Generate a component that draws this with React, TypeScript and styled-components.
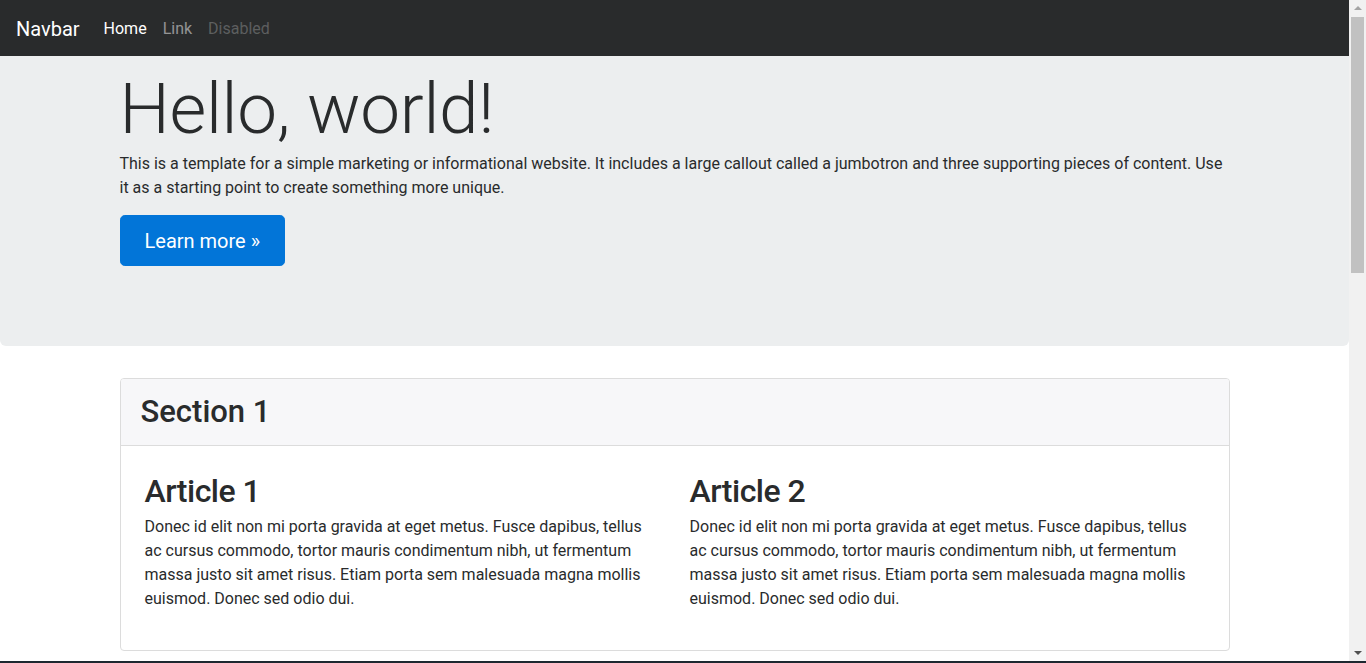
import React from "react";
import styled, { createGlobalStyle } from "styled-components";

const GlobalStyle = createGlobalStyle`
  html, body { margin: 0; padding: 0; overflow: hidden; }
  body {
    font-family: Roboto, "Liberation Sans", sans-serif;
    font-size: 16px;
    line-height: 1.5;
    color: #292b2c;
    background: #fff;
  }
  * { box-sizing: border-box; }
`;

const Screen = styled.div`
  display: flex;
  flex-direction: column;
  height: 663px;
  width: 1366px;
`;

const Window = styled.div`
  display: flex;
  height: 661px;
  overflow: hidden;
`;

const Taskbar = styled.div`
  height: 2px;
  background: #1d2830;
`;

const Page = styled.div`
  flex: 1;
  min-width: 0;
  overflow: hidden;
`;

const Navbar = styled.nav`
  display: flex;
  align-items: center;
  height: 56px;
  padding: 9px 16px 7px;
  background: #292b2c;
`;

const Brand = styled.a`
  font-size: 20px;
  line-height: 30px;
  padding: 5px 0;
  margin-right: 16px;
  color: #fff;
  text-decoration: none;
`;

const NavList = styled.ul`
  display: flex;
  list-style: none;
  margin: 0;
  padding: 0;
`;

const NavLink = styled.a<{ $state: "active" | "normal" | "disabled" }>`
  display: block;
  padding: 8px;
  line-height: 24px;
  text-decoration: none;
  color: ${(p) =>
    p.$state === "active"
      ? "#fff"
      : p.$state === "disabled"
      ? "rgba(255,255,255,0.25)"
      : "rgba(255,255,255,0.5)"};
`;

const Jumbotron = styled.section`
  background: #eceeef;
  padding: 18px 0 80px;
  border-radius: 0 0 6px 6px;
  margin-bottom: 32px;
`;

const Container = styled.div`
  width: 1110px;
  margin: 0 auto;
`;

const Display = styled.h1`
  margin: 0;
  font-size: 71px;
  font-weight: 300;
  line-height: 70px;
  letter-spacing: -0.3px;
`;

const Lead = styled.p`
  margin: 8px 0 15px;
  line-height: 24px;
`;

const PrimaryButton = styled.a`
  display: inline-block;
  padding: 13px 24px 11px;
  font-size: 20px;
  line-height: 25px;
  color: #fff;
  background: #0275d8;
  border: 1px solid #0275d8;
  border-radius: 4.8px;
  text-decoration: none;
`;

const Card = styled.div`
  border: 1px solid #dcdcdc;
  border-radius: 4px;
  overflow: hidden;
`;

const CardHeader = styled.div`
  background: #f7f7f9;
  border-bottom: 1px solid #dcdcdc;
  padding: 16px 20px;
`;

const SectionTitle = styled.h2`
  margin: 0;
  font-size: 31px;
  font-weight: 500;
  line-height: 34px;
`;

const CardBody = styled.div`
  display: grid;
  grid-template-columns: 1fr 1fr;
  column-gap: 30px;
  padding: 28px 24px 23px;
`;

const Article = styled.article``;

const ArticleTitle = styled.h3`
  margin: 0 0 6px;
  font-size: 32px;
  font-weight: 500;
  line-height: 35px;
  letter-spacing: -0.5px;
`;

const ArticleText = styled.p`
  margin: 0 0 16px;
  line-height: 24px;
`;

const Scrollbar = styled.div`
  width: 17px;
  flex: none;
  background: #f1f1f1;
  display: flex;
  flex-direction: column;
  align-items: center;
`;

const Arrow = styled.div<{ $dir: "up" | "down" }>`
  width: 0;
  height: 0;
  margin: ${(p) => (p.$dir === "up" ? "6px 0 7px" : "0 0 6px")};
  border-left: 4px solid transparent;
  border-right: 4px solid transparent;
  ${(p) =>
    p.$dir === "up"
      ? "border-bottom: 4px solid #a3a3a3;"
      : "border-top: 4px solid #505050;"}
`;

const Thumb = styled.div`
  width: 13px;
  height: 256px;
  background: #c1c1c1;
`;

const Spacer = styled.div`
  flex: 1;
`;

const articleText =
  "Donec id elit non mi porta gravida at eget metus. Fusce dapibus, tellus ac cursus commodo, tortor mauris condimentum nibh, ut fermentum massa justo sit amet risus. Etiam porta sem malesuada magna mollis euismod. Donec sed odio dui.";

export default function App() {
  return (
    <Screen>
      <GlobalStyle />
      <Window>
        <Page>
          <Navbar>
            <Brand href="#">Navbar</Brand>
            <NavList>
              <li><NavLink $state="active" href="#">Home</NavLink></li>
              <li><NavLink $state="normal" href="#">Link</NavLink></li>
              <li><NavLink $state="disabled" href="#">Disabled</NavLink></li>
            </NavList>
          </Navbar>
          <Jumbotron>
            <Container>
              <Display>Hello, world!</Display>
              <Lead>
                This is a template for a simple marketing or informational website. It includes a large
                callout called a jumbotron and three supporting pieces of content. Use it as a starting
                point to create something more unique.
              </Lead>
              <PrimaryButton href="#">Learn more »</PrimaryButton>
            </Container>
          </Jumbotron>
          <Container>
            <Card>
              <CardHeader>
                <SectionTitle>Section 1</SectionTitle>
              </CardHeader>
              <CardBody>
                <Article>
                  <ArticleTitle>Article 1</ArticleTitle>
                  <ArticleText>{articleText}</ArticleText>
                </Article>
                <Article>
                  <ArticleTitle>Article 2</ArticleTitle>
                  <ArticleText>{articleText}</ArticleText>
                </Article>
              </CardBody>
            </Card>
          </Container>
        </Page>
        <Scrollbar>
          <Arrow $dir="up" />
          <Thumb />
          <Spacer />
          <Arrow $dir="down" />
        </Scrollbar>
      </Window>
      <Taskbar />
    </Screen>
  );
}
